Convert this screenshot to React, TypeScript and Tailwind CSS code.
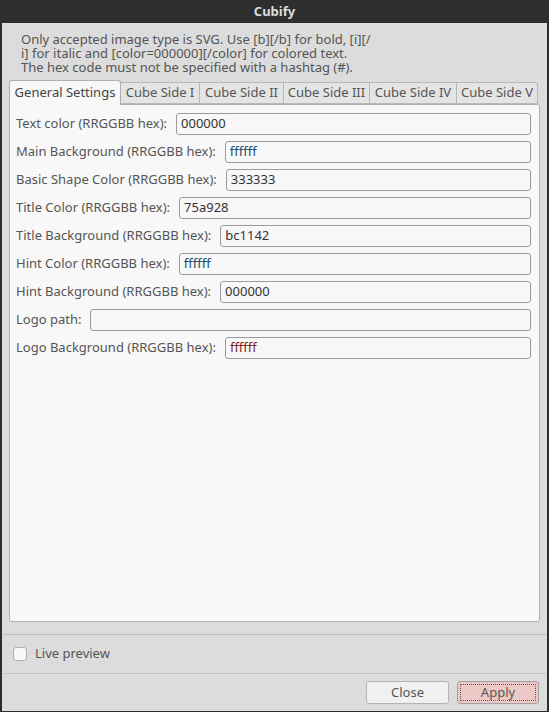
import React from "react";

const font = { fontFamily: '"Noto Sans", "Open Sans", sans-serif' };

const rows: { label: string; value: string; color?: string }[] = [
  { label: "Text color (RRGGBB hex):", value: "000000" },
  { label: "Main Background (RRGGBB hex):", value: "ffffff", color: "text-[#1d4f6e]" },
  { label: "Basic Shape Color (RRGGBB hex):", value: "333333" },
  { label: "Title Color (RRGGBB hex):", value: "75a928" },
  { label: "Title Background (RRGGBB hex):", value: "bc1142" },
  { label: "Hint Color (RRGGBB hex):", value: "ffffff", color: "text-[#1d4f6e]" },
  { label: "Hint Background (RRGGBB hex):", value: "000000" },
  { label: "Logo path:", value: "" },
  { label: "Logo Background (RRGGBB hex):", value: "ffffff", color: "text-[#7a1f1f]" },
];

const tabs = ["Cube Side I", "Cube Side II", "Cube Side III", "Cube Side IV", "Cube Side V"];

export default function App() {
  return (
    <div
      className="w-[549px] h-[712px] bg-[#2e2e2e] flex flex-col px-[2px] pb-[1px] overflow-hidden"
      style={font}
    >
      <div className="h-[23px] flex items-center justify-center text-[13px] font-bold text-[#dcdcdc] shrink-0">
        Cubify
      </div>
      <div className="flex-1 bg-[#dcdcdc] flex flex-col">
        <div className="pl-[19px] pt-[9px] text-[13px] leading-[14px] text-[#555555]">
          <div>Only accepted image type is SVG. Use [b][/b] for bold, [i][/</div>
          <div>i] for italic and [color=000000][/color] for colored text.</div>
          <div>The hex code must not be specified with a hashtag (#).</div>
        </div>
        <div className="mt-[6px] px-[7px] flex flex-col">
          <div className="flex items-end h-[24px] pl-0">
            <div className="h-[25px] w-[112px] -mb-[1px] relative z-10 bg-[#f8f8f8] border border-[#b0b0b0] border-b-0 rounded-t-[3px] flex items-center justify-center text-[13px] text-[#444444]">
              General Settings
            </div>
            {tabs.map((t, i) => (
              <div
                key={t}
                className={
                  "h-[22px] bg-[#e4e4e4] border border-[#b8b8b8] border-l-0 flex items-center justify-center text-[13px] text-[#555555] " +
                  (i === 0
                    ? "w-[79px]"
                    : i === 1
                    ? "w-[84px]"
                    : i === 2
                    ? "w-[86px]"
                    : i === 3
                    ? "w-[87px]"
                    : "w-[81px] rounded-tr-[3px]")
                }
              >
                {t}
              </div>
            ))}
          </div>
          <div className="h-[518px] bg-[#f8f8f8] border border-[#b0b0b0] rounded-b-[3px] rounded-tr-[3px] pt-[8px] pl-[6px] pr-[8px] flex flex-col gap-[6px]">
            {rows.map((r) => (
              <div key={r.label} className="flex items-center h-[22px]">
                <span className="text-[13px] text-[#555555] whitespace-nowrap mr-[9px]">{r.label}</span>
                <div
                  className={
                    "flex-1 h-[22px] border border-[#9a9a9a] rounded-[3px] bg-[#f8f8f8] flex items-center pl-[4px] text-[13px] " +
                    (r.color ?? "text-[#333333]")
                  }
                >
                  {r.value}
                </div>
              </div>
            ))}
          </div>
        </div>
        <div className="mt-[12px] mx-[1px] h-px bg-[#bdbdbd]" />
        <div className="flex items-center h-[38px] pl-[11px]">
          <div className="w-[14px] h-[14px] rounded-[3px] border border-[#b0b0b0] bg-[#f8f8f8]" />
          <span className="ml-[8px] text-[13px] text-[#555555]">Live preview</span>
        </div>
        <div className="mx-[1px] h-px bg-[#c4c4c4]" />
        <div className="flex justify-end gap-[8px] pr-[8px] pt-[7px]">
          <div className="w-[83px] h-[23px] rounded-[3px] border border-[#b4b4b4] bg-[#f0f0f0] flex items-center justify-center text-[13px] text-[#555555]">
            Close
          </div>
          <div className="w-[82px] h-[23px] rounded-[3px] border border-[#a8a0a0] bg-[#ecc9c6] p-[2px] flex">
            <div className="flex-1 border border-dotted border-[#6a5555] flex items-center justify-center text-[13px] text-[#555555]">
              Apply
            </div>
          </div>
        </div>
      </div>
    </div>
  );
}
